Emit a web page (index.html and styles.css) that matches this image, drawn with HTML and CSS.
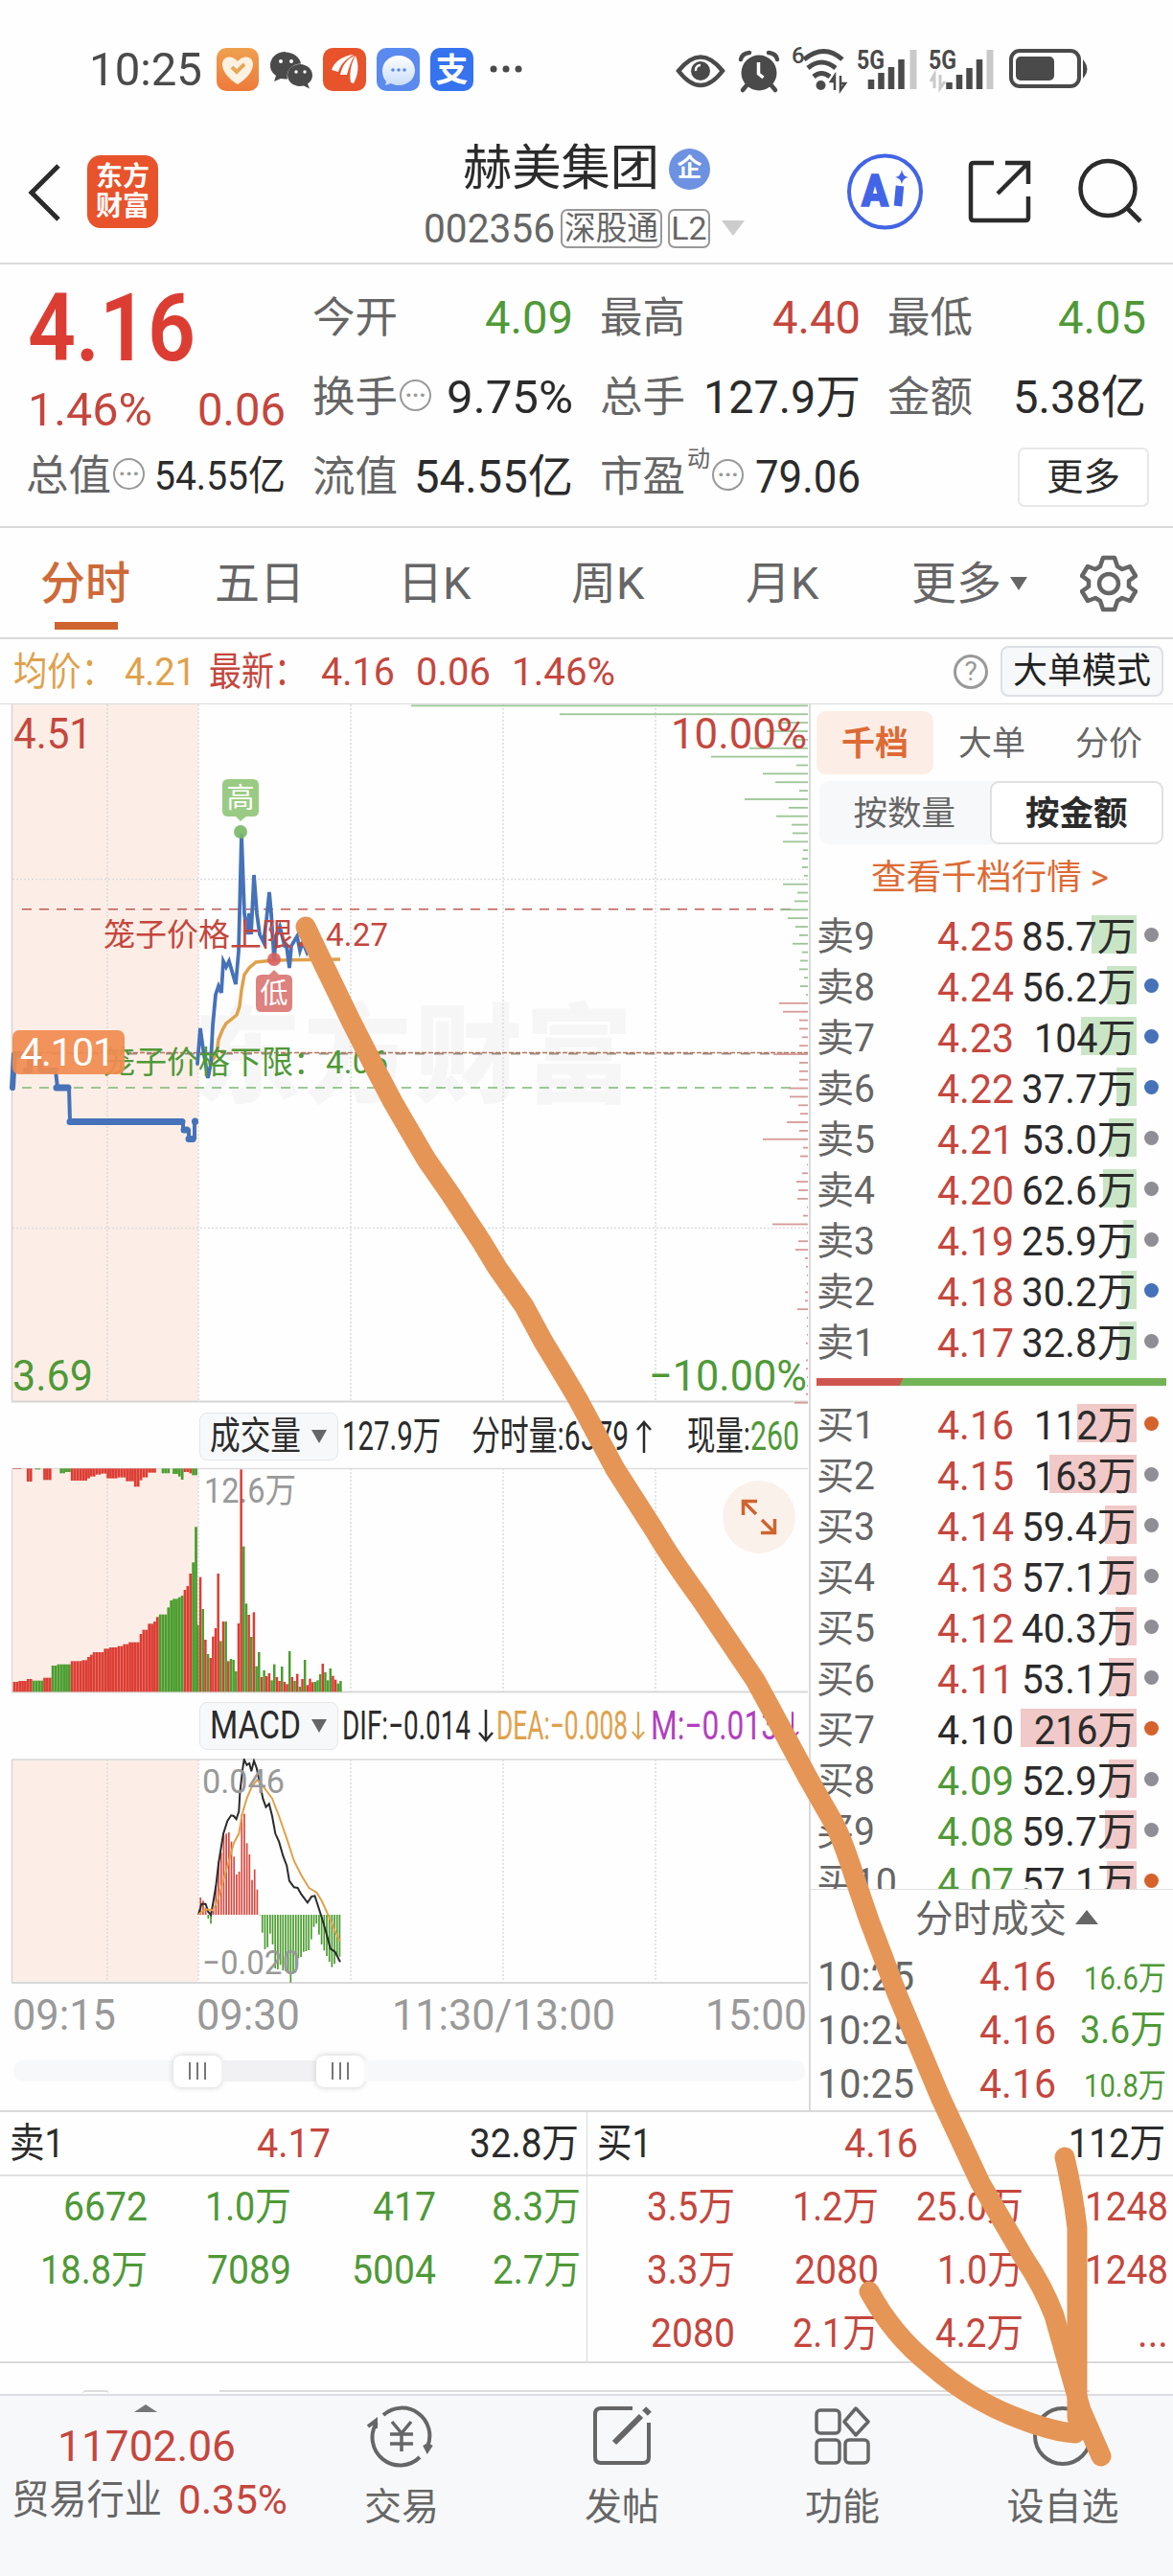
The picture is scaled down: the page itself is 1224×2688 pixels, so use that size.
FILE: index.html
```html
<!DOCTYPE html>
<html lang="zh-CN">
<head>
<meta charset="utf-8">
<title>赫美集团 002356</title>
<link rel="stylesheet" href="styles.css">
</head>
<body>
<div class="status">
  <span class="clock" data-w="118">10:25</span>
  <svg class="apps" width="330" height="50" viewBox="222 49 330 50">
    <defs>
      <linearGradient id="og" x2="0" y2="1"><stop offset="0" stop-color="#eea04f"/><stop offset="1" stop-color="#ee7a3a"/></linearGradient>
      <linearGradient id="wg" x2="0" y2="1"><stop offset="0" stop-color="#fff"/><stop offset="1" stop-color="#c9dcfb"/></linearGradient>
    </defs>
    <rect x="226" y="51" width="44" height="45" rx="10" fill="url(#og)"/>
    <path d="M248 89C238 83 232 75 232 68C232 59 243 58 248 65C253 58 264 59 264 68C264 75 258 83 248 89Z" fill="#fdf1e2"/>
    <path d="M242 71L247 76L255 68" fill="none" stroke="#e6a758" stroke-width="4"/>
    <path d="M298 55c-9 0-16 6-16 14 0 5 2 8 6 11l-2 6 7-3c2 .5 5 .5 7 .4-2-9 5-16 14-16-1-7-8-12-16-12z" fill="#4a4a4a"/>
    <path d="M313 68c-7 0-13 5-13 11.500s6 11.500 13 11.500l4-.5 6 3-2-5c3-2 5-5 5-9 0-6.500-6-11.500-13-11.500z" fill="#4a4a4a"/>
    <g fill="#fff"><circle cx="293" cy="65" r="2"/><circle cx="304" cy="65" r="2"/><circle cx="309" cy="76" r="1.700"/><circle cx="318" cy="76" r="1.700"/></g>
    <rect x="337" y="51" width="45" height="45" rx="10" fill="#e8532b"/>
    <path d="M346 74C349 65 358 59 369 58C360 63 355 69 353 76ZM355 79C357 70 361 63 370 59C366 65 364 72 362 79ZM366 87C364 76 367 66 371 59C375 69 374 79 369 88Z" fill="#fff"/>
    <rect x="393" y="51" width="45" height="45" rx="10" fill="#5a8aed"/>
    <path d="M416 59c-10 0-17 7-17 16 0 5 2 9 4 11l-1 4 6-2c3 1.500 5 2 8 2 10 0 17-7 17-15.500S426 59 416 59z" fill="url(#wg)"/>
    <g fill="#5a8aed"><circle cx="410" cy="74" r="1.800"/><circle cx="416" cy="74" r="1.800"/><circle cx="422" cy="74" r="1.800"/></g>
    <rect x="449" y="51" width="45" height="45" rx="10" fill="#3573ef"/>
    <text x="471.500" y="86" font-size="34" font-weight="700" fill="#fff" text-anchor="middle">支</text>
    <g fill="#4a4a4a"><circle cx="515" cy="73" r="3.500"/><circle cx="528" cy="73" r="3.500"/><circle cx="541" cy="73" r="3.500"/></g>
  </svg>
  <svg class="sys" width="436" height="52" viewBox="704 47 436 52" fill="#4a4a4a">
    <path d="M708 74Q731 45 754 74Q731 104 708 74Z" fill="none" stroke="#4a4a4a" stroke-width="4.500"/>
    <circle cx="731" cy="74" r="10"/><path d="M726 74a5 5 0 0 1 5-6" stroke="#fff" stroke-width="2.500" fill="none"/>
    <circle cx="792" cy="76" r="18.500"/>
    <path d="M773 62q1-6 9-7M811 62q-1-6-9-7M780 88l-5 6M804 88l5 6" stroke="#4a4a4a" stroke-width="4.500" stroke-linecap="round" fill="none"/>
    <path d="M791.500 65v12l5 4" stroke="#fff" stroke-width="3.500" fill="none"/>
    <text x="826" y="66" font-size="24" font-weight="500">6</text>
    <g fill="none" stroke="#4a4a4a" stroke-width="5"><path d="M839 62Q860 45 879 62"/><path d="M843 71Q857 59 872 71"/><path d="M849 80Q857 73 866 80"/></g>
    <circle cx="856.500" cy="89" r="5"/>
    <path d="M871 94V79l-4 6h3M877 79v15l5-7h-5" fill="none" stroke="#4a4a4a" stroke-width="2.500"/>
    <text x="894" y="72" font-size="27" font-weight="700" textLength="29" lengthAdjust="spacingAndGlyphs">5G</text>
    <path d="M909 93V83M919.500 93V76M930 93V70M940.500 93V62" stroke="#4a4a4a" stroke-width="6.500"/>
    <path d="M953 93V52M1033 93V52" stroke="#c9c9c9" stroke-width="7"/>
    <text x="969" y="72" font-size="27" font-weight="700" textLength="29" lengthAdjust="spacingAndGlyphs">5G</text>
    <path d="M990.500 93V86M1001 93V78M1011.500 93V71M1022 93V62" stroke="#4a4a4a" stroke-width="6.500"/>
    <path d="M975 92V78l-4 7M981 78v14l5-7" fill="none" stroke="#c9c9c9" stroke-width="3"/>
    <rect x="1055" y="53" width="71" height="37" rx="9" fill="none" stroke="#4a4a4a" stroke-width="4"/>
    <rect x="1060" y="59" width="40" height="25" rx="5"/>
    <path d="M1131 65q5 7 0 14z" stroke="#4a4a4a" stroke-width="2"/>
  </svg>
</div>

<header class="head">
  <svg class="back" width="38" height="66" viewBox="0 0 38 66"><path d="M33 5L5 33L33 61" fill="none" stroke="#2b2b2b" stroke-width="5"/></svg>
  <div class="logo"><span>东方</span><span>财富</span></div>
  <div class="title">
    <div class="name"><span data-w="205">赫美集团</span><i class="corp">企</i></div>
    <div class="code"><span data-w="137">002356</span><b class="w1"><span data-w="98">深股通</span></b><b class="w2">L2</b><svg width="26" height="18" viewBox="0 0 26 18"><path d="M1 1H25L13 17Z" fill="#ccc"/></svg></div>
  </div>
  <svg class="tools" width="310" height="86" viewBox="882 161 310 86" fill="none" stroke="#2b2b2b">
    <circle cx="923.500" cy="204" r="37.500" stroke="#4264e6" stroke-width="4"/>
    <text x="899" y="219" font-size="46" font-weight="900" fill="#4264e6" stroke="#4264e6" stroke-width="1.500" textLength="28" lengthAdjust="spacingAndGlyphs">A</text>
    <path d="M939 198L937 219" stroke="#4264e6" stroke-width="8.500"/>
    <path d="M941 181Q942 188 948 189Q942 190 941 196Q940 190 934 189Q940 188 941 181Z" fill="#4264e6" stroke="none"/>
    <path d="M1037 174H1016Q1013 174 1013 177V231Q1013 234 1016 234H1070Q1073 234 1073 231V209M1073 196V174H1049M1073 174L1041 206" stroke-width="4.500"/>
    <circle cx="1156" cy="200.500" r="28.500" stroke-width="4.500"/><path d="M1176 221L1190 235" stroke-width="5"/>
  </svg>
</header>

<section class="quote">
  <div class="q1">
    <div class="last"><span data-w="175">4.16</span></div>
    <div class="chg"><span data-w="130">1.46%</span><span data-w="92">0.06</span></div>
    <div class="q k3"><label>总值</label><i class="dots">···</i><span class="sm" data-w="137">54.55亿</span></div>
  </div>
  <div class="col">
    <div class="q"><label>今开</label><span class="g" data-w="92">4.09</span></div>
    <div class="q"><label>换手</label><i class="dots">···</i><span data-w="132">9.75%</span></div>
    <div class="q"><label>流值</label><span data-w="166">54.55亿</span></div>
  </div>
  <div class="col">
    <div class="q"><label>最高</label><span class="r" data-w="92">4.40</span></div>
    <div class="q"><label>总手</label><span data-w="164">127.9万</span></div>
    <div class="q"><label>市盈</label><sup>动</sup><i class="dots">···</i><span data-w="110">79.06</span></div>
  </div>
  <div class="col">
    <div class="q"><label>最低</label><span class="g" data-w="92">4.05</span></div>
    <div class="q"><label>金额</label><span data-w="139">5.38亿</span></div>
    <div class="q end"><button class="more">更多</button></div>
  </div>
</section>

<nav class="tabs">
  <span class="on">分时</span><span>五日</span><span>日K</span><span>周K</span><span>月K</span>
  <span class="drop">更多<svg width="18" height="14" viewBox="0 0 18 14"><path d="M0 0H18L9 14Z" fill="#666"/></svg></span>
  <svg class="gear" width="60" height="60" viewBox="-30 -30 60 60" fill="none" stroke="#666" stroke-width="4.500" stroke-linejoin="round"><path d="M-6 -27H6L9 -18L14 -15L22 -18L28 -8L21 -3V3L28 8L22 18L14 15L9 18L6 27H-6L-9 18L-14 15L-22 18L-28 8L-21 3V-3L-28 -8L-22 -18L-14 -15L-9 -18Z"/><circle r="10"/></svg>
</nav>

<div class="info">
  <span class="y a" data-w="106">均价：</span><span class="y b" data-w="74">4.21</span>
  <span class="r c" data-w="102">最新：</span><span class="r d" data-w="77">4.16</span><span class="r e" data-w="78">0.06</span><span class="r e" data-w="108">1.46%</span>
  <i class="help">?</i><button class="mode"><span data-w="144">大单模式</span></button>
</div>

<main class="main">
  <div class="charts">
    <svg id="price" width="845" height="730" viewBox="0 735 845 730">
      <rect x="13" y="735" width="194" height="728" fill="#fceee7"/>
      <g font-size="112" font-weight="900" fill="#f6f6f6"><text x="202" y="1142" textLength="458">东方财富</text></g>
      <path class="grid" d="M112 735V1463M207 735V1463M366 735V1463M525 735V1463M684 735V1463M13 917.500H843M13 1281.500H843"/>
      <path d="M12.500 735V1463" stroke="#d6d6d6" stroke-width="1.500"/><path d="M12 1462.500H843" stroke="#d6d6d6" stroke-width="2"/>
      <path d="M23 948.700H825" stroke="#bf5a55" stroke-width="1.600" stroke-dasharray="10 8"/>
      <path d="M23 1135H825" stroke="#7db877" stroke-width="1.600" stroke-dasharray="10 8"/>
      <path d="M13 1099.500H843" stroke="#999087" stroke-width="2" stroke-dasharray="10 10"/>
      <path d="M13 1098.500H843" stroke="#b9735a" stroke-width="1.300" stroke-dasharray="5 2"/>
      <g id="depth"></g>
      <path d="M218 1111L226 1100L228 1085L232 1075L236 1068L241 1064L247 1059L250 1050L252 1033L255 1017L260 1010L267 1004L286 1002L355 1001" fill="none" stroke="#e0a14b" stroke-width="3.500"/>
      <g fill="none" stroke="#4572b8" stroke-linejoin="round" stroke-linecap="round">
        <path stroke-width="6" d="M13 1135L15 1100H40L43 1117H58M27 1117H31V1100"/>
        <path stroke-width="4" d="M58 1117L60 1135H72L73 1170M191 1170V1179H197V1188H203V1170"/>
        <path stroke-width="7" d="M59 1135H71M73 1170.500H190M192 1179H195M197 1188.500H201M203.500 1170V1170.500"/>
        <path stroke-width="3.800" stroke-linejoin="miter" d="M206 1110L209 1073L212 1095L217 1125L220 1110L222 1070L225 1038L228 1029L231 1036L233 1003L236 1009L239 1003L246 1027L249 993L252 870L255 953L258 975L260 953L262 975L265 913L268 953L271 975L275 983L278 960L281 931L283 953L286 1001L288 977L292 967L297 987L299 987L302 1010L304 987L310 977L313 992L316 983L320 993L323 983"/>
      </g>
      <circle cx="251" cy="868" r="7" fill="#78b868" opacity=".9"/><circle cx="286" cy="1001" r="7" fill="#d66260" opacity=".9"/>
      <path d="M238 813H264Q270 813 270 819V846Q270 852 264 852H257L251 857L246 852H238Q232 852 232 846V819Q232 813 238 813Z" fill="#9acb84"/>
      <path d="M273 1017H281L286 1012L291 1017H299Q305 1017 305 1023V1050Q305 1056 299 1056H273Q267 1056 267 1050V1023Q267 1017 273 1017Z" fill="#dd827f"/>
      <text x="251" y="843" font-size="29" fill="#fff" text-anchor="middle">高</text><text x="286" y="1047" font-size="29" fill="#fff" text-anchor="middle">低</text>
      <g font-size="33" fill="#c5463d"><text x="108" y="987" textLength="231">笼子价格上限：</text><text x="340" y="987" textLength="65">4.27</text></g>
      <g font-size="33" fill="#4f9937"><text x="108" y="1120" textLength="231">笼子价格下限：</text><text x="340" y="1120" textLength="65">4.06</text></g>
      <rect x="13" y="1075" width="117" height="46" rx="7" fill="#f08c50" opacity=".93"/>
      <text x="21" y="1112" font-size="41" fill="#fff" textLength="99">4.101</text>
      <g font-size="45" fill="#c5463d"><text x="14" y="781" textLength="82" lengthAdjust="spacingAndGlyphs">4.51</text><text x="700" y="781" textLength="142" lengthAdjust="spacingAndGlyphs">10.00%</text></g>
      <g font-size="45" fill="#4f9937"><text x="13" y="1451" textLength="84" lengthAdjust="spacingAndGlyphs">3.69</text><text x="677" y="1451" textLength="165" lengthAdjust="spacingAndGlyphs">−10.00%</text></g>
    </svg>
    <div class="ind"><button class="chip"><span data-w="95">成交量</span><i class="tri"></i></button>
      <span class="i0" data-w="103">127.9万</span><span class="i1" data-w="164">分时量:6379</span><svg class="ar" width="16" height="36" viewBox="0 0 16 36"><path d="M8 35V3M1 11L8 3L15 11" fill="none" stroke="#2b2b2b" stroke-width="2.500"/></svg><span class="i2" data-w="66">现量:</span><span class="g" data-w="51">260</span></div>
    <svg id="volume" width="845" height="236" viewBox="0 1531 845 236">
      <rect x="13" y="1532" width="194" height="233" fill="#fceee7"/>
      <path class="grid" d="M112 1532V1765M207 1532V1765M366 1532V1765M525 1532V1765M684 1532V1765"/>
      <path d="M12.500 1532.500H843M12.500 1532V1765" fill="none" stroke="#ddd" stroke-width="1.500"/><path d="M12 1765.500H843" stroke="#d8d8d8" stroke-width="2"/>
      <text x="213" y="1568" font-size="36" fill="#999" textLength="96" lengthAdjust="spacingAndGlyphs">12.6万</text>
      <g id="bars"></g>
      <circle cx="792" cy="1583" r="38" fill="#fbf1eb"/>
      <path d="M775.500 1581V1566.500H790M776 1567L789 1580M808.500 1585V1599.500H794M808 1599L795 1586" fill="none" stroke="#d0642f" stroke-width="3.500"/>
    </svg>
    <div class="ind m"><button class="chip"><span data-w="95">MACD</span><i class="tri"></i></button>
      <span class="i0" data-w="134">DIF:−0.014</span><svg class="ar" width="16" height="36" viewBox="0 0 16 36"><path d="M8 1V33M1 25L8 33L15 25" fill="none" stroke="#2b2b2b" stroke-width="2.500"/></svg><span class="y i3" data-w="137">DEA:−0.008</span><svg class="ar s" width="14" height="36" viewBox="0 0 16 36"><path d="M8 1V33M1 25L8 33L15 25" fill="none" stroke="#e0a14b" stroke-width="2.500"/></svg><span class="p i4" data-w="133">M:−0.013</span><svg class="ar v" width="14" height="36" viewBox="0 0 16 36"><path d="M8 1V33M1 25L8 33L15 25" fill="none" stroke="#b23fc0" stroke-width="2.500"/></svg></div>
    <svg id="macd" width="845" height="236" viewBox="0 1835 845 236">
      <rect x="13" y="1836" width="194" height="233" fill="#fceee7"/>
      <path class="grid" d="M112 1836V2069M207 1836V2069M366 1836V2069M525 1836V2069M684 1836V2069"/>
      <path d="M12.500 1836H843M12.500 1836V2069" fill="none" stroke="#d8d8d8" stroke-width="1.500"/><path d="M12 2069H843" stroke="#d8d8d8" stroke-width="2"/>
      <g id="hist"></g>
      <polyline id="dif" fill="none" stroke="#2b2b2b" stroke-width="2"/><polyline id="dea" fill="none" stroke="#e0a14b" stroke-width="2"/>
      <g font-size="35" fill="#999"><text x="211" y="1871" textLength="86" lengthAdjust="spacingAndGlyphs">0.046</text><text x="211" y="2060" textLength="102" lengthAdjust="spacingAndGlyphs">−0.020</text></g>
    </svg>
    <div class="times"><span data-w="108">09:15</span><span data-w="108">09:30</span><span data-w="233">11:30/13:00</span><span data-w="106">15:00</span></div>
    <div class="slider"><i class="s0"></i><b></b><i class="s1"></i><b></b><i class="s2"></i></div>
  </div>

  <aside class="book">
    <div class="btabs"><span class="on">千档</span><span>大单</span><span>分价</span></div>
    <div class="seg"><span>按数量</span><span class="on">按金额</span></div>
    <div class="link"><span data-w="248">查看千档行情 &gt;</span></div>
    <div id="asks"></div>
    <div class="ratio"></div>
    <div id="bids"></div>
    <div class="thead"><span data-w="158">分时成交</span><svg width="24" height="15" viewBox="0 0 24 15"><path d="M0 15H24L12 0Z" fill="#666"/></svg></div>
    <div class="trade"><span data-w="101">10:25</span><span class="r" data-w="80">4.16</span><span class="g sm" data-w="86">16.6万</span></div>
    <div class="trade"><span data-w="101">10:25</span><span class="r" data-w="80">4.16</span><span class="g" data-w="90">3.6万</span></div>
    <div class="trade"><span data-w="101">10:25</span><span class="r" data-w="80">4.16</span><span class="g sm" data-w="86">10.8万</span></div>
  </aside>
</main>

<section class="queue">
  <div class="half">
    <div class="qh"><span data-w="57">卖1</span><span class="r" data-w="77">4.17</span><span data-w="114">32.8万</span></div>
    <div class="qr g"><span data-w="88">6672</span><span data-w="90">1.0万</span><span data-w="66">417</span><span data-w="93">8.3万</span></div>
    <div class="qr g"><span data-w="112">18.8万</span><span data-w="88">7089</span><span data-w="88">5004</span><span data-w="92">2.7万</span></div>
  </div>
  <div class="half">
    <div class="qh"><span data-w="57">买1</span><span class="r" data-w="77">4.16</span><span data-w="101">112万</span></div>
    <div class="qr r"><span data-w="92">3.5万</span><span data-w="90">1.2万</span><span data-w="112">25.0万</span><span data-w="87">1248</span></div>
    <div class="qr r"><span data-w="92">3.3万</span><span data-w="88">2080</span><span data-w="90">1.0万</span><span data-w="87">1248</span></div>
    <div class="qr r"><span data-w="88">2080</span><span data-w="90">2.1万</span><span data-w="92">4.2万</span><span data-w="32">...</span></div>
  </div>
</section>
<div class="peek"><i></i><b></b></div>

<footer class="foot">
  <div class="index"><svg width="24" height="8" viewBox="0 0 24 8"><path d="M0 8H24L12 0Z" fill="#777"/></svg>
    <span class="r n" data-w="186">11702.06</span>
    <div class="ind2"><span data-w="157">贸易行业</span><span class="r" data-w="114">0.35%</span></div></div>
  <a class="act"><svg width="76" height="66" viewBox="-38 -33 76 66" fill="none" stroke="#666" stroke-width="4"><path d="M-19 -22A29 29 0 0 1 27 11M31 9L27 15L24 9M19 22A29 29 0 0 1 -26 -14M-35 -10L-27 -16V-8"/><path d="M-10 -15L0 -3L10 -15M0 -3V16M-12 -2H12M-12 8H12" stroke-width="3.500"/></svg>交易</a>
  <a class="act"><svg width="76" height="66" viewBox="-38 -33 76 66" fill="none" stroke="#666" stroke-width="4"><path d="M11 -29H-22Q-28 -29 -28 -23V22Q-28 28 -22 28H22Q28 28 28 22V-14"/><path d="M-8 7L20 -21" stroke-width="6"/><path d="M24 -24L28 -28" stroke-width="8"/></svg>发帖</a>
  <a class="act"><svg width="76" height="66" viewBox="-38 -33 76 66" fill="none" stroke="#666" stroke-width="3.500"><rect x="-27" y="-27" width="24" height="24" rx="4"/><rect x="-27" y="4" width="24" height="24" rx="4"/><rect x="3" y="4" width="24" height="24" rx="4"/><path d="M14 -29L27 -15L14 -1L2 -15Z" stroke-linejoin="round"/></svg>功能</a>
  <a class="act"><svg width="76" height="66" viewBox="-38 -33 76 66" fill="none" stroke="#666" stroke-width="4"><circle r="29"/></svg>设自选</a>
</footer>

<svg class="ink" width="1224" height="2688" viewBox="0 0 1224 2688" fill="none" stroke="#e59556" stroke-width="21" stroke-linecap="round" stroke-linejoin="round">
  <path d="M319 967L338 1007L367 1067L390 1112L410 1150L428 1181L445 1210L470 1246L502 1295L519 1323L547 1363L567 1400L587 1433L603 1460L642 1533L683 1597Q700 1626 730 1667L788 1753L807 1788L843 1855L867 1897Q878 1915 892 1960L907 2004L937 2083L981 2188L1023 2278L1069 2357Q1088 2385 1100 2416L1116 2473L1128 2515L1149 2563"/>
  <path d="M1111 2251Q1120 2290 1124 2325V2523"/>
  <path d="M907 2391Q932 2437 970 2467Q1010 2502 1054 2520T1122 2539"/>
</svg>
<script>
const ns = 'http://www.w3.org/2000/svg';
const RED = '#dc3d33', GREEN = '#4b9d2f';

function rect(parent, x, y, w, h, fill) {
  const r = document.createElementNS(ns, 'rect');
  r.setAttribute('x', x); r.setAttribute('y', y);
  r.setAttribute('width', w); r.setAttribute('height', Math.max(h, 0.5));
  r.setAttribute('fill', fill);
  parent.appendChild(r);
}

// order book: label, price, amount, depth bar width, dot kind
const asks = [
  ['卖9', '4.25', '85.7万', 47, ''], ['卖8', '4.24', '56.2万', 31, 'b2'], ['卖7', '4.23', '104万', 58, 'b2'],
  ['卖6', '4.22', '37.7万', 21, 'b2'], ['卖5', '4.21', '53.0万', 29, ''], ['卖4', '4.20', '62.6万', 35, ''],
  ['卖3', '4.19', '25.9万', 14, ''], ['卖2', '4.18', '30.2万', 16, 'b2'], ['卖1', '4.17', '32.8万', 18, '']];
const bids = [
  ['买1', '4.16', '112万', 62, 'o2'], ['买2', '4.15', '163万', 91, ''], ['买3', '4.14', '59.4万', 33, ''],
  ['买4', '4.13', '57.1万', 31, ''], ['买5', '4.12', '40.3万', 22, ''], ['买6', '4.11', '53.1万', 29, ''],
  ['买7', '4.10', '216万', 121, 'o2'], ['买8', '4.09', '52.9万', 29, ''], ['买9', '4.08', '59.7万', 33, ''],
  ['买10', '4.07', '57.1万', 31, 'o2']];
function levels(id, rows) {
  document.getElementById(id).innerHTML = rows.map(([n, p, a, d, k]) => {
    const c = p > '4.10' ? 'r' : p < '4.10' ? 'g' : 'flat';
    return `<div class="lv"><span data-w="${n.length > 2 ? 84 : 61}">${n}</span><span class="${c}" data-w="80">${p}</span>` +
      `<span class="amt" style="--d:${d}px"><span data-w="${a.length > 4 ? 119 : 106}">${a}</span></span><i class="dot ${k}"></i></div>`;
  }).join('');
}
levels('asks', asks);
levels('bids', bids);

// resting volume by price, drawn from the right edge
const depth = [414,259,30,43,13,61,101,12,47,34,9,66,20,33,17,16,26,5,6,6,4,26,11,14,29,21,13,9,16,6,8,9,4,8,2,
  30,26,9,9,6,9,36,9,9,9,20,19,10,8,22,9,47,5,8,1,6,12,10,11,1,5,37,1,10,13,3,2,1,1,3,3,11,1,1,1,2,0,2,2,1,1,2,14];
const dg = document.getElementById('depth');
depth.forEach((w, i) => rect(dg, 843 - w, 735.5 + i * 8.87, w, 1.8, i < 35 ? '#9cc596' : '#d69a99'));

// chart data is kept in panel units: 1.845 per px across, 3 per px down
const X = x => x / 1.845;
const bars = document.getElementById('bars');
const vy = y => 1450 + y / 3;
const stepAt = (keys, x) => { let k = keys[0]; for (const q of keys) if (q[0] <= x) k = q; return k; };
const auction = [[23,915,0],[35,912,0],[47,906,0],[57,911,1],[78,902,0],[94,880,0],[99,864,1],[105,860,1],[131,850,0],[155,847,0],
  [163,837,0],[170,830,0],[178,822,0],[195,811,0],[208,807,0],[225,803,0],[234,797,0],[245,791,0],[264,765,0],[270,752,0],[281,733,0],
  [292,726,0],[298,712,0],[302,704,1],[318,682,1],[324,660,1],[330,655,1],[338,650,1],[346,645,1],[350,627,0],[356,615,0],[361,576,0],[367,541,1],[372,430,1]];
const unmatched = [[23,249,0],[38,247,0],[47,288,0],[57,247,0],[65,250,1],[74,247,0],[79,283,0],[95,262,0],[99,247,0],[115,262,1],[122,258,1],[131,285,0],
  [163,278,0],[172,272,0],[180,266,0],[193,263,0],[203,278,0],[225,275,0],[240,287,0],[256,304,0],[265,284,0],[272,275,0],[281,260,0],[298,247,0],
  [307,262,1],[322,247,0],[332,264,1],[338,272,1],[345,282,1],[350,258,0],[361,262,0],[366,268,1]];
for (let x = 25; x < 376; x += 5.3) {
  const a = stepAt(auction, x), u = stepAt(unmatched, x);
  rect(bars, X(x), vy(a[1]), 2.75, (946 - a[1]) / 3, a[2] ? GREEN : RED);
  if (u[1] > 247) rect(bars, X(x), vy(247), 2.75, (u[1] - 247) / 3, u[2] ? GREEN : RED);
}
const session = '737g587r687g783r828g840r773r747r576r787g726r726g850r843g846g882g732r250r491g670g705r774g697r866g822g900r879g897r888r910g860g900r912r867g915r922r819g900r912g890r930g906r846g925r905r916r915g910g891g858r885g910g873g896r908r920g912g';
[...session.matchAll(/(\d+)([rg])/g)].forEach((m, i) =>
  rect(bars, X(378.5 + i * 4.91), vy(+m[1]), 2.5, (946 - m[1]) / 3, m[2] === 'g' ? GREEN : RED));

const hist = document.getElementById('hist');
const my = y => 1780 + y / 3;
const macd = [600,610,632,666,682,640,560,487,460,405,400,396,425,472,528,519,340,338,430,465,545,512,575,654,
  710,762,756,713,747,822,825,811,828,830,835,866,832,825,790,786,770,768,765,731,692,682,716,747,766,783,801,818,808,783,785];
macd.forEach((v, i) => rect(hist, X(384.5 + i * 4.96), my(Math.min(v, 654)), 1.7, Math.abs(v - 654) / 3, v < 654 ? '#d9483f' : GREEN));
const line = (id, pts) => document.getElementById(id).setAttribute('points', pts.map(([x, y]) => X(x).toFixed(1) + ',' + my(y).toFixed(1)).join(' '));
line('dif', [[382,653],[388,620],[396,620],[401,645],[406,655],[411,610],[416,560],[421,490],[430,400],[438,360],[445,343],[450,345],[455,355],[460,330],[462,270],[467,200],[470,168],[475,185],[480,180],[484,205],[489,172],[494,195],[500,240],[506,290],[512,317],[518,307],[524,345],[530,400],[537,425],[545,470],[552,500],[557,548],[566,568],[573,570],[580,590],[592,616],[600,597],[606,595],[612,625],[620,665],[628,710],[636,760],[645,770],[655,802]]);
line('dea', [[382,653],[395,637],[410,640],[420,605],[430,545],[440,490],[450,430],[460,400],[466,340],[475,290],[485,252],[495,232],[503,245],[515,270],[524,290],[537,345],[552,415],[566,485],[580,530],[595,570],[610,585],[620,612],[632,655],[645,705],[655,737]]);

const figures = [...document.querySelectorAll('[data-w]')];
const natural = figures.map(el => el.getBoundingClientRect().width);
figures.forEach((el, i) => {
  const w = +el.dataset.w;
  el.style.transform = `scaleX(${w / natural[i]})`;
  el.style.marginRight = `${w - natural[i]}px`;
});
</script>
</body>
</html>
```
FILE: styles.css
```css
* { box-sizing: border-box; }
body { margin: 0; width: 1224px; height: 2688px; overflow: hidden; background: #fefefe; position: relative; color: #2b2b2b; font-family: Roboto, "Noto Sans CJK SC", sans-serif; }
svg { display: block; flex: none; }
i { font-style: normal; }
button { font: inherit; color: inherit; padding: 0; }
[data-w] { display: inline-block; white-space: nowrap; transform-origin: 0 50%; flex: none; justify-self: start; }
.r { color: #c5463d !important; }
.g { color: #4f9937 !important; }
.y { color: #e0a14b; }
.p { color: #b23fc0; }

.status { height: 127px; padding: 0 84px 0 93px; display: flex; align-items: flex-start; color: #4a4a4a; }
.clock { font-size: 49px; line-height: 60px; margin-top: 43px; }
.apps { margin: 48px 0 0 11px; }
.sys { margin: 47px 0 0 auto; }

.head { height: 149px; border-bottom: 2px solid #dadada; display: flex; padding: 0 32px 0 28px; }
.back { margin-top: 41px; }
.logo { width: 74px; height: 76px; margin: 35px 0 0 25px; border-radius: 14px; background: #e8532b; color: #fff; font-size: 28px; line-height: 31px; font-weight: 700; display: flex; flex-direction: column; align-items: center; justify-content: center; }
.title { margin: 19px 0 0 277px; width: 340px; }
.name { display: flex; align-items: center; height: 60px; padding-left: 41px; font-size: 51px; line-height: 60px; }
.corp { width: 43px; height: 43px; margin-left: 10px; border-radius: 50%; background: #6d92e2; color: #fff; font-size: 26px; font-weight: 700; line-height: 41px; text-align: center; }
.code { display: flex; align-items: center; height: 64px; font-size: 43px; line-height: 50px; color: #666; }
.code b { border: 2px solid #999; border-radius: 7px; height: 41px; line-height: 36px; font-size: 34px; font-weight: 400; text-align: left; }
.w1 { width: 106px; margin-left: 6px; padding-left: 2px; }
.w2 { width: 44px; margin: 0 11px 0 6px; }
.code .w2 { text-align: center; }
.tools { margin: 30px 0 0 auto; }

.quote { height: 275px; padding: 14px 29px 0 29px; border-bottom: 2px solid #dadada; display: grid; grid-template-columns: 269px 270px 270px 268px; gap: 30px; font-size: 48px; }
.q { display: flex; align-items: center; height: 83px; line-height: 60px; }
.q > span { margin-left: auto; }
.q label { font-size: 44.500px; color: #666; margin-left: -2px; }
.q sup { font-size: 24px; line-height: 30px; align-self: flex-start; margin: 8px 0 0 2px; color: #666; }
.end { justify-content: flex-end; }
.k3 { height: 73px; }
.sm { font-size: 42px; }
.dots { width: 33px; height: 33px; margin-left: 2px; margin-top: -5px; border: 2px solid #999; border-radius: 50%; color: #999; font-size: 24px; line-height: 29px; text-align: center; font-weight: 700; }
.q sup + .dots { margin-left: 2px; }
.last { height: 105px; line-height: 105px; font-size: 99px; font-weight: 600; color: #dc3d33; }
.chg { height: 65px; line-height: 65px; display: flex; justify-content: space-between; color: #c5463d; }
.more { width: 137px; height: 62px; margin-right: -3px; border: 2px solid #e8e8e8; border-radius: 7px; background: #fff; font-size: 38.500px; line-height: 54px; }

.tabs { height: 116px; border-bottom: 2px solid #dadada; display: flex; font-size: 47px; line-height: 60px; padding: 28px 0 0 42px; color: #666; white-space: nowrap; }
.tabs span { margin-right: 88px; flex: none; width: 94px; }
.tabs span:nth-child(2) { margin-right: 97px; }
.tabs span:nth-child(3) { width: 72px; margin-right: 109px; }
.tabs span:nth-child(4) { width: 76px; margin-right: 106px; }
.tabs span:nth-child(5) { width: 76px; margin-right: 97px; }
.tabs .drop { display: flex; align-items: center; gap: 9px; width: 122px; height: 60px; margin-right: 54px; }
.tabs .on { color: #cd6a38; font-weight: 500; height: 80px; background: linear-gradient(#d0642f, #d0642f) 15px 70px / 66px 8px no-repeat; }

.info { height: 68px; border-bottom: 1px solid #dadada; display: flex; align-items: center; font-size: 41px; line-height: 50px; padding-left: 14px; }
.b { margin-left: 10px; }
.c { margin-left: 14px; }
.d { margin-left: 15px; }
.e { margin-left: 22px; }
.help { width: 36px; height: 36px; margin-left: auto; border: 3px solid #999; border-radius: 50%; color: #999; font-size: 28px; line-height: 30px; text-align: center; }
.mode { width: 170px; height: 53px; margin: 0 10px 0 13px; padding-left: 11px; text-align: left; border: 2px solid #dcdfe4; border-radius: 8px; background: #f7f8fa; font-size: 37px; line-height: 46px; color: #222; }

.main { display: flex; height: 1467px; }
.charts { width: 844px; flex: none; }
.grid { stroke: #dcdcdc; stroke-width: 1.500px; stroke-dasharray: 2 2; fill: none; }
.ind { height: 66px; display: flex; align-items: center; padding: 1px 0 0 208px; font-size: 42px; line-height: 50px; }
.ind.m { height: 68px; padding-top: 0; }
.chip { display: flex; align-items: center; width: 145px; height: 50px; padding-left: 10px; border: 1px solid #e4e6ea; border-radius: 8px; background: #f7f8fa; font-size: 40px; flex: none; }
.tri { margin-left: 11px; border: 8.500px solid transparent; border-top: 14px solid #666; border-bottom: 0; }
.i0 { margin-left: 4px; }
.i1 { margin-left: 32px; }
.ar { margin-left: 8px; }
.i2 { margin-left: 37px; }
.i3 { margin-left: 3px; }
.ar.s { margin-left: 4px; }
.i4 { margin-left: 6px; }
.times { height: 63px; display: flex; font-size: 45px; line-height: 63px; color: #999; padding: 0 2px 0 13px; }
.times span:nth-child(2) { margin-left: 84px; }
.times span:nth-child(3) { margin-left: 96px; }
.times span:nth-child(4) { margin-left: auto; }
.slider { display: flex; align-items: center; height: 54px; margin: 0 4px 0 14px; }
.slider i { height: 22px; background: #f7f8fa; }
.slider b { width: 50px; height: 33px; border-radius: 8px; box-shadow: 0 0 6px #ccc; background: linear-gradient(90deg, #777 2px, transparent 2px 8px, #777 8px 10px, transparent 10px 16px, #777 16px 18px, transparent 18px) 16px 7px / 18px 18px no-repeat #fff; }
.s0 { width: 167px; border-radius: 10px 0 0 10px; }
.slider .s1 { width: 99px; background: #f1f1f3; }
.s2 { flex: 1; border-radius: 0 10px 10px 0; }

.book { width: 380px; border-left: 2px solid #dadada; color: #666; }
.btabs { display: flex; padding: 7px 0 0 6px; height: 80px; }
.btabs span { width: 122px; height: 66px; border-radius: 10px; font-size: 35px; line-height: 69px; text-align: center; }
.btabs .on { background: #fceee7; color: #de6a34; font-weight: 700; }
.seg { display: flex; margin: 0 10px 0 9px; height: 66px; border-radius: 10px; background: #f7f8fa; font-size: 35.500px; line-height: 69px; text-align: center; }
.seg span { flex: 1; }
.seg .on { background: #fff; border: 2px solid #e0e0e2; border-radius: 9px; color: #2b2b2b; font-weight: 700; line-height: 65px; }
.link { height: 70px; line-height: 71px; padding-left: 63px; font-size: 36px; color: #de6a34; }
.lv { height: 53.05px; display: grid; grid-template-columns: 126px 80px 128px 15px; align-items: center; padding-left: 6px; font-size: 42px; line-height: 53px; }
.lv > span:first-child { font-size: 40px; }
.lv .amt { color: #2b2b2b; display: flex; justify-content: flex-end; background: linear-gradient(#c9e5c5, #c9e5c5) right 4px / var(--d) 40px no-repeat; padding-right: 1px; height: 53px; }
#bids .amt { background-image: linear-gradient(#f0c9c8, #f0c9c8); }
.dot { width: 15px; height: 15px; margin: -4px 0 0 8px; border-radius: 50%; background: #8f8e94; }
.dot.b2 { background: #4572b8; }
.dot.o2 { background: #d5622b; }
.flat { color: #2b2b2b; }
.ratio { height: 8px; margin: 9px 7px 15px 6px; background: linear-gradient(115deg, #cf5650 82px, #74b458 82px); }
#asks { height: 478px; }
#bids { height: 511px; overflow: hidden; border-bottom: 1px solid #e0e0e0; }
.thead { height: 62px; display: flex; align-items: center; justify-content: flex-start; padding-left: 109px; gap: 9px; font-size: 39.500px; line-height: 60px; }
.thead svg { margin-top: -6px; }
.trade { height: 56px; display: flex; align-items: center; padding: 0 7px 0 7px; font-size: 43px; line-height: 56px; }
.trade span:nth-child(2) { margin-left: 68px; }
.trade span:nth-child(3) { margin-left: auto; font-size: 41px; }
.trade .sm { font-size: 34px !important; padding-top: 4px; }

.queue { display: flex; height: 264px; border-top: 2px solid #dadada; border-bottom: 2px solid #dadada; font-size: 42px; }
.half { width: 612px; }
.half + .half { border-left: 1px solid #dadada; }
.qh { height: 67px; display: grid; grid-template-columns: 258px 1fr auto; align-items: center; padding: 0 8px 0 10px; border-bottom: 2px solid #e0e0e0; line-height: 60px; }
.qr { height: 66px; display: grid; grid-template-columns: 154px 150px 151px 151px; line-height: 64px; }
.qr span { justify-self: end; }
.peek { height: 32px; display: flex; align-items: flex-end; padding-left: 86px; }
.peek i { width: 28px; height: 4px; border-top: 2px solid #ddd; border-radius: 14px 14px 0 0; }
.peek b { width: 908px; height: 4px; margin-left: 115px; border-top: 2px solid #ddd; }

.foot { height: 190px; border-top: 2px solid #dcdde0; background: #f7f8fa; display: flex; color: #666; }
.index { width: 304px; flex: none; padding: 9px 0 0 12px; }
.index svg { margin-left: 128px; }
.n { font-size: 44px; line-height: 72px; margin-left: 48px; vertical-align: top; }
.ind2 { display: flex; gap: 17px; font-size: 42px; line-height: 50px; margin-top: -5px; }
.act { width: 230px; display: flex; flex-direction: column; align-items: center; padding-top: 9px; font-size: 39px; line-height: 56px; gap: 13px; }
.ink { position: absolute; left: 0; top: 0; }
```
